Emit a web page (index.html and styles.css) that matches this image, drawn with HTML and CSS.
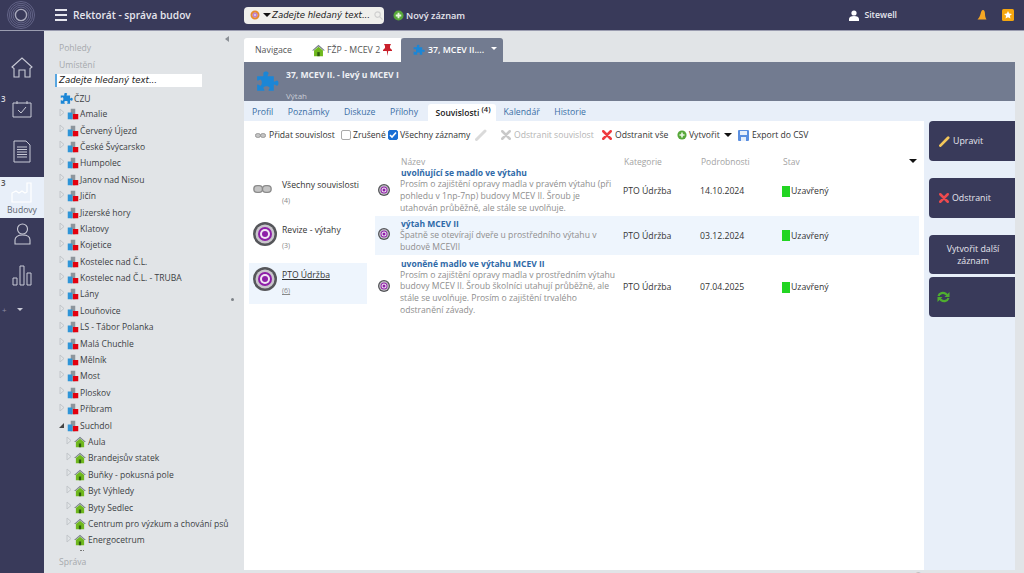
FILE: index.html
```html
<!DOCTYPE html>
<html lang="cs">

<head>
    <meta charset="UTF-8" />
    <title>Rektorát - správa budov</title>
    <link rel="stylesheet" href="styles.css">
</head>

<body>
    <svg class="defs" width="0" height="0">
        <symbol id="puzzle" viewBox="0 0 24 24">
            <path fill="#1b86d6" d="M9 3c0-2 5-2 5 0 0 1-1 1-1 3h6v5c2 0 2-1 3-1 2 0 2 5 0 5-1 0-1-1-3-1v6h-5c0-2 1-2 1-3 0-2-6-2-6 0 0 1 1 1 1 3H3v-6c2 0 2 1 3 1 2 0 2-6 0-6-1 0-1 1-3 1V6h6c0-2 0-2 0-3z" />
        </symbol>
        <symbol id="buildings" viewBox="0 0 16 16">
            <rect x="5" y="1" width="6" height="14" fill="#8d959c" />
            <rect x="1" y="6" width="6" height="9" fill="#2f95d8" />
            <rect x="8" y="8" width="7" height="7" fill="#e3000f" />
        </symbol>
        <symbol id="house" viewBox="0 0 16 16">
            <path fill="#7a838a" d="M8 1 0 8h2l6-5 6 5h2z" />
            <path fill="#6fb81e" d="M2.500 8 8 3.500 13.500 8v7h-11z" />
            <rect x="6.500" y="10" width="3" height="5" fill="#2d5a10" />
        </symbol>
        <symbol id="target" viewBox="0 0 24 24">
            <circle cx="12" cy="12" r="12" fill="#55565a" />
            <circle cx="12" cy="12" r="9.500" fill="#c9c6cc" />
            <circle cx="12" cy="12" r="7" fill="#8e1fa8" />
            <circle cx="12" cy="12" r="5" fill="#f1e6f4" />
            <circle cx="12" cy="12" r="3" fill="#8e1fa8" />
        </symbol>
        <symbol id="cross" viewBox="0 0 12 12">
            <path d="M1.500 1.500 10.500 10.500M10.500 1.500 1.500 10.500" stroke="currentColor" stroke-width="3" stroke-linecap="round" fill="none" />
        </symbol>
        <symbol id="plus" viewBox="0 0 12 12">
            <circle cx="6" cy="6" r="5.500" fill="#57a83a" />
            <path d="M6 3v6M3 6h6" stroke="#e9f5e2" stroke-width="2" />
        </symbol>
        <symbol id="link" viewBox="0 0 14 6">
            <rect x=".5" y=".5" width="6.500" height="5" rx="2.500" fill="#c4c4c4" stroke="#8b8b8b" />
            <rect x="7" y=".5" width="6.500" height="5" rx="2.500" fill="#c4c4c4" stroke="#8b8b8b" />
        </symbol>
        <symbol id="pencil" viewBox="0 0 12 12">
            <path d="M1.500 10.500 10 2" stroke="currentColor" stroke-width="3" stroke-linecap="round" />
        </symbol>
        <symbol id="expander" viewBox="0 0 6 9">
            <path d="M1 1 5 4.500 1 8z" fill="none" stroke="#c2c6ca" />
        </symbol>
    </svg>

    <div class="app">
        <header class="topbar">
            <div class="logo-box">
                <svg width="28" height="28" viewBox="0 0 30 30" fill="none" stroke="#65668a">
                    <circle cx="15" cy="15" r="14.500" />
                    <circle cx="15" cy="15" r="12.500" />
                    <circle cx="15" cy="15" r="10.500" />
                    <circle cx="15" cy="15" r="8.500" />
                    <circle cx="15" cy="15" r="6" stroke="#a9aabd" stroke-width="1.500" />
                </svg>
            </div>
            <div class="burger"><span></span><span></span><span></span></div>
            <div class="app-title">Rektorát - správa budov</div>
            <div class="search">
                <svg width="10" height="10" viewBox="0 0 10 10" fill="none">
                    <circle cx="5" cy="5" r="3.500" stroke="#e8892f" stroke-width="2" />
                    <circle cx="5" cy="5" r="2" fill="#d8c0e8" stroke="#b05fc0" />
                </svg>
                <span class="caret-down"></span>
                <span class="search-text">Zadejte hledaný text...</span>
                <svg width="9" height="9" viewBox="0 0 10 10" fill="none" stroke="#d0d0d0" stroke-width="1.300">
                    <circle cx="4" cy="4" r="3" />
                    <path d="M6.500 6.500 9.500 9.500" />
                </svg>
            </div>
            <div class="new-record">
                <svg width="11" height="11"><use href="#plus" /></svg>
                <span>Nový záznam</span>
            </div>
            <div class="user">
                <svg width="10" height="11" viewBox="0 0 10 11" fill="#fff">
                    <circle cx="5" cy="3" r="2.600" />
                    <path d="M0 11V9c0-2 2-3 5-3s5 1 5 3v2z" />
                </svg>
                <span>Sitewell</span>
            </div>
            <svg class="bell" width="10" height="11" viewBox="0 0 10 11">
                <path fill="#f5a623" d="M6 0c1.500 0 2 2 2 4s.5 4 1.500 5.500H.5C2 8 3 6 3.500 4S4.500 0 6 0z" />
            </svg>
            <svg class="star-box" width="12" height="12" viewBox="0 0 12 12">
                <rect width="12" height="12" rx="1.500" fill="#f5a60f" />
                <path fill="#fff" d="m6 2 1.200 2.600 2.800.3-2.100 1.900.6 2.800L6 8.200 3.500 9.600l.6-2.800L2 4.900l2.800-.3z" />
            </svg>
        </header>

        <div class="workspace">
            <nav class="rail">
                <div class="rail-item rail-home">
                    <svg width="22" height="21" viewBox="0 0 22 21" fill="none" stroke="#c9cad6" stroke-width="1.100">
                        <path d="M1 10 11 1l10 9-2 1.500V20h-5v-7H8v7H3v-8.500z" />
                    </svg>
                </div>
                <div class="rail-item rail-cal">
                    <span class="rail-count">3</span>
                    <svg width="20" height="17" viewBox="0 0 20 17" fill="none" stroke="#c9cad6" stroke-width="1">
                        <path d="M1 2h18v14H1zM5 0v3M15 0v3" />
                        <path d="m6 9 3 3 5-6" />
                    </svg>
                </div>
                <div class="rail-item rail-doc">
                    <svg width="18" height="23" viewBox="0 0 18 23" fill="none" stroke="#c9cad6" stroke-width="1">
                        <path d="M1 1h12l4 4v17H1z" />
                        <path d="M4 7h10M4 9.500h10M4 12h10M4 14.500h10M4 17h10" />
                    </svg>
                </div>
                <div class="rail-item rail-active">
                    <span class="rail-count">3</span>
                    <svg width="22" height="21" viewBox="0 0 22 21" fill="none" stroke="#fff" stroke-width="1.200">
                        <path d="M1 20V11l4-2 3 2 3-2 3 2 2-1V1h4v19z" />
                    </svg>
                    <span class="rail-label">Budovy</span>
                </div>
                <div class="rail-item rail-person">
                    <svg width="17" height="22" viewBox="0 0 17 22" fill="none" stroke="#c9cad6" stroke-width="1.100">
                        <circle cx="8.500" cy="6" r="5" />
                        <path d="M1 21v-4c0-3 3-5 7.500-5s7.500 2 7.500 5v4z" />
                    </svg>
                </div>
                <div class="rail-item rail-chart">
                    <svg width="20" height="21" viewBox="0 0 20 21" fill="none" stroke="#c9cad6" stroke-width="1">
                        <path d="M1 13h4v7H1zM8 1h4v19H8zM15 8h4v12h-4z" />
                    </svg>
                </div>
                <div class="rail-tools"><span>+</span><span class="rail-caret"></span></div>
            </nav>

            <aside class="sidebar">
                <span class="sidebar-handle"></span>
                <span class="sidebar-dot"></span>
                <div class="side-heading">Pohledy</div>
                <div class="side-heading side-place">Umístění</div>
                <div class="tree-search">Zadejte hledaný text...</div>
                <div class="tree" id="tree">
                    <div class="tree-row tree-root"><span class="open"></span><svg class="node" width="14" height="14"><use href="#puzzle" /></svg>ČZU</div>
                </div>
                <div class="side-heading side-bottom">Správa</div>
            </aside>

            <main class="main">
                <div class="tabs">
                    <div class="tab tab-nav">Navigace</div>
                    <div class="tab tab-record">
                        <svg width="13" height="13"><use href="#house" /></svg>
                        <span>FŽP - MCEV 2</span>
                        <svg class="pin" width="9" height="12" viewBox="0 0 9 12">
                            <path fill="#c9202b" d="M1 0h7L7 2v2l2 2v1H5.200L4.500 12 3.800 7H0V6l2-2V2z" />
                        </svg>
                    </div>
                    <div class="tab tab-active">
                        <svg width="13" height="13"><use href="#puzzle" /></svg>
                        <span>37, MCEV II....</span>
                        <span class="caret-white"></span>
                    </div>
                </div>

                <div class="record-head">
                    <svg width="25" height="25"><use href="#puzzle" /></svg>
                    <div class="record-titles">
                        <div class="record-name">37, MCEV II. - levý u MCEV I</div>
                        <div class="record-type">Výtah</div>
                    </div>
                </div>

                <div class="subtabs">
                    <span>Profil</span>
                    <span>Poznámky</span>
                    <span>Diskuze</span>
                    <span>Přílohy</span>
                    <span class="subtab-active">Souvislosti <sup>(4)</sup></span>
                    <span>Kalendář</span>
                    <span>Historie</span>
                </div>

                <div class="content">
                    <section class="panel">
                        <div class="toolbar">
                            <svg class="t-link" width="11" height="5"><use href="#link" /></svg>
                            <span class="t-add">Přidat souvislost</span>
                            <span class="check"></span>
                            <span class="t-cancel">Zrušené</span>
                            <span class="check checked">
                                <svg width="10" height="10" viewBox="0 0 10 10" fill="none" stroke="#fff" stroke-width="1.600"><path d="m2 5 2 2 4-4.500" /></svg>
                            </span>
                            <span class="t-all">Všechny záznamy</span>
                            <svg class="t-pencil" width="12" height="12"><use href="#pencil" /></svg>
                            <svg class="t-x-off" width="10" height="10"><use href="#cross" /></svg>
                            <span class="t-off">Odstranit souvislost</span>
                            <svg class="t-x" width="10" height="10"><use href="#cross" /></svg>
                            <span class="t-remove">Odstranit vše</span>
                            <svg class="t-plus" width="10" height="10"><use href="#plus" /></svg>
                            <span class="t-create">Vytvořit</span>
                            <span class="caret-down t-caret"></span>
                            <svg class="t-save" width="11" height="11" viewBox="0 0 11 11">
                                <rect width="11" height="11" rx="1" fill="#5b8fe0" />
                                <rect x="2" y="1" width="7" height="4" fill="#e8effa" />
                                <rect x="3" y="7" width="5" height="4" fill="#e8effa" />
                            </svg>
                            <span class="t-export">Export do CSV</span>
                        </div>

                        <div class="columns">
                            <div class="groups">
                                <div class="group group-all">
                                    <svg class="group-link" width="19" height="8"><use href="#link" /></svg>
                                    <div>
                                        <div class="group-name">Všechny souvislosti</div>
                                        <div class="group-count">(4)</div>
                                    </div>
                                </div>
                                <div class="group">
                                    <svg width="24" height="24"><use href="#target" /></svg>
                                    <div>
                                        <div class="group-name">Revize - výtahy</div>
                                        <div class="group-count">(3)</div>
                                    </div>
                                </div>
                                <div class="group group-selected">
                                    <svg width="24" height="24"><use href="#target" /></svg>
                                    <div>
                                        <div class="group-name">PTO Údržba</div>
                                        <div class="group-count">(6)</div>
                                    </div>
                                </div>
                            </div>

                            <div class="list">
                                <div class="list-head">
                                    <span class="col-name">Název</span>
                                    <span class="col-cat">Kategorie</span>
                                    <span class="col-date">Podrobnosti</span>
                                    <span class="col-state">Stav</span>
                                    <span class="caret-down head-caret"></span>
                                </div>

                                <div class="row row-first">
                                    <svg width="12" height="12"><use href="#target" /></svg>
                                    <div class="col-name">
                                        <div class="row-title">uvolňující se madlo ve výtahu</div>
                                        <div class="row-text">Prosím o zajištění opravy madla v pravém výtahu (při pohledu v 1np-7np) budovy MCEV II. Šroub je utahován průběžně, ale stále se uvolňuje.</div>
                                    </div>
                                    <div class="col-cat">PTO Údržba</div>
                                    <div class="col-date">14.10.2024</div>
                                    <div class="col-state"><i></i>Uzavřený</div>
                                </div>

                                <div class="row row-hl">
                                    <svg width="12" height="12"><use href="#target" /></svg>
                                    <div class="col-name">
                                        <div class="row-title">výtah MCEV II</div>
                                        <div class="row-text">Špatně se otevírají dveře u prostředního výtahu v budově MCEVII</div>
                                    </div>
                                    <div class="col-cat">PTO Údržba</div>
                                    <div class="col-date">03.12.2024</div>
                                    <div class="col-state"><i></i>Uzavřený</div>
                                </div>

                                <div class="row row-last">
                                    <svg width="12" height="12"><use href="#target" /></svg>
                                    <div class="col-name">
                                        <div class="row-title">uvoněné madlo ve výtahu MCEV II</div>
                                        <div class="row-text">Prosím o zajištění opravy madla v prostředním výtahu budovy MCEV II. Šroub školníci utahují průběžně, ale stále se uvolňuje. Prosím o zajištění trvalého odstranění závady.</div>
                                    </div>
                                    <div class="col-cat">PTO Údržba</div>
                                    <div class="col-date">07.04.2025</div>
                                    <div class="col-state"><i></i>Uzavřený</div>
                                </div>
                            </div>
                        </div>
                    </section>

                    <aside class="actions">
                        <div class="action">
                            <svg class="icon-pencil" width="11" height="11"><use href="#pencil" /></svg>Upravit
                        </div>
                        <div class="action action-remove">
                            <svg class="icon-x" width="10" height="10"><use href="#cross" /></svg>Odstranit
                        </div>
                        <div class="action action-next">Vytvořit další záznam</div>
                        <div class="action action-refresh">
                            <svg width="13" height="12" viewBox="0 0 13 12" fill="none" stroke="#4fae2f" stroke-width="2.200">
                                <path d="M1.500 5C2.500 2 6 1 9 3l2 2" />
                                <path d="M11.500 7C10.500 10 7 11 4 9L2 7" />
                                <path fill="#4fae2f" stroke="none" d="M12.500 1v5h-5zM.5 11V6h5z" />
                            </svg>
                        </div>
                    </aside>
                </div>
                <div class="footer">© Sitewell EIP4 v20250422.22.24</div>
            </main>
        </div>
    </div>

    <script>
        const tree = document.getElementById("tree");
        const sites = ["Amalie", "Červený Újezd", "České Švýcarsko", "Humpolec", "Janov nad Nisou", "Jičín", "Jizerské hory", "Klatovy", "Kojetice", "Kostelec nad Č.L.", "Kostelec nad Č.L. - TRUBA", "Lány", "Louňovice", "LS - Tábor Polanka", "Malá Chuchle", "Mělník", "Most", "Ploskov", "Příbram"];
        const houses = ["Aula", "Brandejsův statek", "Buňky - pokusná pole", "Byt Výhledy", "Byty Sedlec", "Centrum pro výzkum a chování psů", "Energocetrum"];

        function addRow(name, icon, cls, expander) {
            const row = document.createElement("div");
            row.className = "tree-row " + cls;
            row.innerHTML = expander + `<svg class="node" width="12" height="12"><use href="#${icon}" /></svg>` + name;
            tree.appendChild(row);
        }

        const closed = '<svg class="closed" width="6" height="9"><use href="#expander" /></svg>';
        sites.forEach(name => addRow(name, "buildings", "tree-site", closed));
        addRow("Suchdol", "buildings", "tree-site", '<span class="open"></span>');
        houses.forEach(name => addRow(name, "house", "tree-house", closed));

        // next row of the tree is scrolled out, only its top shows
        const more = document.createElement("div");
        more.className = "tree-more";
        tree.appendChild(more);
    </script>
</body>

</html>
```

FILE: styles.css
```css
* {
    box-sizing: border-box;
}

body {
    margin: 0;
    overflow: hidden;
    background: #e1e4e7;
    font-family: "Open Sans", sans-serif;
    font-size: 9px;
    color: #333;
}

.defs {
    position: absolute;
}

.app {
    width: 1024px;
    height: 573px;
    display: flex;
    flex-direction: column;
    overflow: hidden;
}

/* top bar */
.topbar {
    height: 31px;
    flex: none;
    display: flex;
    align-items: center;
    padding-right: 10px;
    background: #393a5a;
    border-bottom: 1px solid #9a9cb0;
    color: #e6e6ee;
}

.topbar > * {
    flex: none;
}

.logo-box {
    width: 44px;
    padding-left: 7px;
    display: flex;
}

.burger {
    width: 12px;
    margin-left: 11px;
    display: flex;
    flex-direction: column;
    gap: 3.500px;
}

.burger span {
    height: 1.500px;
    background: #e6e6ee;
}

.app-title {
    width: 171px;
    margin-left: 6px;
    font-size: 10.200px;
    font-weight: 600;
    white-space: nowrap;
}

.search {
    width: 140px;
    height: 17px;
    padding: 0 1px 0 6px;
    display: flex;
    align-items: center;
    background: #efefec;
    border-radius: 4px;
    color: #222;
}

.caret-down {
    display: inline-block;
    width: 0;
    height: 0;
    border-left: 4px solid transparent;
    border-right: 4px solid transparent;
    border-top: 4px solid #111;
}

.search .caret-down {
    margin: 0 1px 0 3px;
}

.search-text {
    width: 102px;
    font-family: "DejaVu Sans", sans-serif;
    font-style: italic;
    font-size: 8.600px;
    white-space: nowrap;
}

.new-record {
    margin-left: 9px;
    display: flex;
    align-items: center;
    gap: 2px;
    font-size: 9.200px;
    font-weight: 600;
    white-space: nowrap;
}

.user {
    margin-left: auto;
    display: flex;
    align-items: center;
    gap: 5px;
    font-size: 8.700px;
    font-weight: 600;
}

.bell {
    margin-left: 80px;
}

.star-box {
    margin-left: 15px;
}

/* left rail */
.workspace {
    flex: 1;
    min-height: 0;
    display: flex;
}

.rail {
    width: 44px;
    flex: none;
    background: #393a5a;
    display: flex;
    flex-direction: column;
}

.rail-item {
    position: relative;
    display: flex;
    flex-direction: column;
    align-items: center;
}

.rail-home {
    padding-top: 26px;
}

.rail-cal {
    padding-top: 23px;
}

.rail-doc {
    padding-top: 22px;
    height: 59px;
}

.rail-active {
    height: 41px;
    padding-top: 5px;
    background: #e8eff9;
}

.rail-label {
    margin-top: 1px;
    font-size: 8.600px;
    color: #5d6470;
}

.rail-count {
    position: absolute;
    left: 1px;
    top: 0;
    font-size: 8px;
    font-weight: 600;
    color: #d8d8e0;
}

.rail-cal .rail-count {
    top: 15px;
}

.rail-active .rail-count {
    color: #555;
}

.rail-person {
    padding-top: 5px;
}

.rail-chart {
    padding-top: 20px;
}

.rail-tools {
    margin-top: 18px;
    padding-left: 2px;
    display: flex;
    align-items: center;
    gap: 10px;
    color: #8d8ea3;
    font-size: 8px;
}

.rail-caret {
    width: 0;
    height: 0;
    border-left: 3.500px solid transparent;
    border-right: 3.500px solid transparent;
    border-top: 3.500px solid #c9cad6;
}

/* tree sidebar */
.sidebar {
    position: relative;
    width: 200px;
    flex: none;
    display: flex;
    flex-direction: column;
    padding: 11px 0 0 15px;
    background: #e1e4e7;
}

.sidebar-handle {
    position: absolute;
    left: 181px;
    top: 5px;
    width: 0;
    height: 0;
    border-top: 3px solid transparent;
    border-bottom: 3px solid transparent;
    border-right: 4px solid #8b9096;
}

.sidebar-dot {
    position: absolute;
    left: 187px;
    top: 267px;
    width: 3px;
    height: 3px;
    border-radius: 50%;
    background: #7d8288;
}

.side-heading {
    font-size: 8.600px;
    color: #a6a9ad;
    line-height: 12px;
}

.side-place {
    margin-top: 5px;
}

.side-bottom {
    margin-top: 2px;
    height: 17px;
}

.tree-search {
    width: 147px;
    height: 13px;
    margin: 3px 0 0 -4px;
    padding-left: 2px;
    background: #fff;
    border-left: 2px solid #58a6e0;
    font-family: "DejaVu Sans", sans-serif;
    font-style: italic;
    font-size: 8.600px;
    line-height: 13px;
    color: #222;
    white-space: nowrap;
}

.tree {
    flex: 1;
    min-height: 0;
    overflow: hidden;
    margin-top: 4px;
}

.tree-row {
    height: 16.400px;
    display: flex;
    align-items: center;
    font-size: 8.550px;
    font-weight: 500;
    color: #3c3f44;
    white-space: nowrap;
}

.node {
    flex: none;
    margin-right: 1px;
}

.tree-root {
    height: 15px;
    margin-left: -7px;
}

.tree-root .node {
    margin: 0 1px 0 2px;
}

.tree-house {
    padding-left: 7px;
}

.tree-house .node {
    margin-right: 2px;
}

.tree-more {
    width: 4px;
    height: 2px;
    margin: 1px 0 0 21px;
    border-top: 1px dotted #777;
}

.closed {
    margin: -4px 2px 0 0;
    flex: none;
}

.open {
    width: 0;
    height: 0;
    border-bottom: 5px solid #444;
    border-left: 5px solid transparent;
    flex: none;
}

.tree-site .open {
    margin-right: 3px;
}

/* main area */
.main {
    width: 771px;
    flex: none;
    display: flex;
    flex-direction: column;
    padding-top: 7px;
}

.tabs {
    height: 24px;
    flex: none;
    display: flex;
    font-size: 8.800px;
}

.tab {
    display: flex;
    align-items: center;
    background: #fff;
    color: #555;
}

.tab-nav {
    width: 56px;
    padding-left: 11px;
    border-top-left-radius: 3px;
}

.tab-record {
    width: 101px;
    padding-left: 12px;
    gap: 2px;
}

.pin {
    margin-left: 1px;
}

.tab-active {
    width: 102px;
    padding-left: 11px;
    gap: 3px;
    background: #727b90;
    color: #fff;
    font-weight: 600;
    border-radius: 3px 3px 0 0;
}

.caret-white {
    width: 0;
    height: 0;
    margin: -3px 0 0 4px;
    border-left: 3.500px solid transparent;
    border-right: 3.500px solid transparent;
    border-top: 3.500px solid #fff;
}

.record-head {
    height: 39px;
    flex: none;
    display: flex;
    padding-left: 10px;
    background: #727b90;
    color: #fff;
}

.record-head svg {
    margin-top: 8px;
}

.record-titles {
    margin-left: 7px;
    display: flex;
    flex-direction: column;
    justify-content: space-between;
}

.record-name {
    margin-top: 7px;
    font-size: 8.600px;
    font-weight: 700;
    color: #eef0f4;
}

.record-type {
    font-size: 8px;
    color: #c8ccd6;
    line-height: 9px;
    margin-bottom: 1px;
}

.subtabs {
    height: 20px;
    flex: none;
    display: flex;
    padding-left: 8px;
    background: #e8eff9;
    font-size: 8.700px;
    color: #3a6ea5;
    font-weight: 500;
}

.subtabs span {
    margin-right: 14.500px;
    line-height: 23px;
}

.subtabs .subtab-active {
    height: 17px;
    margin: 3px 8px 0 -5px;
    padding: 0 5px 0 8px;
    background: #fff;
    border-radius: 3px 3px 0 0;
    color: #222;
    font-weight: 600;
    font-size: 8.500px;
    line-height: 17px;
}

.subtab-active sup {
    font-size: 7.500px;
    line-height: 0;
}

.content {
    flex: 1;
    min-height: 0;
    display: flex;
}

.panel {
    width: 680px;
    flex: none;
    background: #fff;
}

.toolbar {
    height: 28px;
    display: flex;
    align-items: center;
    padding-left: 11px;
    font-size: 8.600px;
    font-weight: 500;
    color: #333;
    white-space: nowrap;
}

.t-add {
    margin-left: 3px;
    width: 72px;
}

.check {
    width: 10px;
    height: 10px;
    flex: none;
    border: 1px solid #aaa;
    border-radius: 2px;
    background: #fff;
}

.checked {
    display: flex;
    background: #1a6fd4;
    border-color: #1a6fd4;
}

.checked svg {
    margin: -1px;
}

.t-cancel {
    width: 35px;
    margin-left: 2px;
}

.t-all {
    width: 75px;
    margin-left: 2px;
}

.t-pencil {
    color: #dadada;
}

.t-x-off {
    margin-left: 14px;
    color: #c9c9c9;
}

.t-off {
    width: 88px;
    margin-left: 3px;
    color: #b4b4b4;
}

.t-x {
    color: #ee3a3e;
}

.t-remove {
    width: 62px;
    margin-left: 3px;
}

.t-create {
    width: 35px;
    margin-left: 2px;
}

.t-caret {
    margin-right: 6px;
}

.t-export {
    margin-left: 3px;
}

.columns {
    display: flex;
}

.groups {
    width: 123px;
    margin-left: 5px;
    flex: none;
    padding-top: 24px;
}

.group {
    height: 41px;
    margin-bottom: 4px;
    display: flex;
    align-items: center;
    gap: 5px;
    padding-left: 4px;
}

.group svg {
    margin-top: -10px;
}

.group > div {
    margin-top: -2px;
}

.group-all {
    gap: 10px;
}

.group-name {
    font-size: 8.600px;
    font-weight: 500;
    color: #333;
    line-height: 14px;
}

.group-count {
    margin-top: 3px;
    font-size: 7px;
    color: #888;
    line-height: 12px;
}

.group-selected {
    width: 118px;
    background: #eef5fd;
}

.group-selected .group-name,
.group-selected .group-count {
    text-decoration: underline;
}

.list {
    width: 544px;
    margin-left: 3px;
    flex: none;
}

.list-head {
    position: relative;
    height: 17px;
    display: flex;
    align-items: flex-start;
    padding: 7px 0 0 26px;
    font-size: 8.500px;
    color: #a3a3a3;
}

.head-caret {
    position: absolute;
    right: 2px;
    top: 10px;
}

.col-name {
    width: 223px;
    flex: none;
}

.col-cat {
    width: 77px;
    flex: none;
}

.col-date {
    width: 82px;
    flex: none;
}

.col-state {
    flex: none;
    display: flex;
    align-items: center;
    gap: 1px;
}

.row {
    display: flex;
    align-items: center;
    padding-left: 3px;
    font-size: 8.700px;
    font-weight: 500;
    color: #333;
}

.row > svg {
    flex: none;
    margin: -3px 10px 0 0;
}

.row-first {
    height: 50px;
}

.row-hl {
    height: 39px;
    background: #eef5fd;
}

.row-last {
    height: 64px;
}

.row-title {
    padding-left: 1px;
    font-size: 8.500px;
    font-weight: 700;
    color: #2f6aa8;
    line-height: 12px;
}

.row-text {
    max-width: 217px;
    font-size: 8.600px;
    font-weight: 400;
    color: #8e8e8e;
    line-height: 11.700px;
}

.col-state i {
    width: 8px;
    height: 11px;
    background: #22d522;
}

/* action buttons */
.actions {
    width: 91px;
    flex: none;
    background: #e8eff9;
    padding-left: 5px;
    display: flex;
    flex-direction: column;
}

.action {
    height: 40px;
    display: flex;
    align-items: center;
    padding-left: 10px;
    gap: 3px;
    background: #393a5a;
    border-radius: 4px 0 0 4px;
    color: #e6e6ee;
    font-size: 8.800px;
    font-weight: 500;
}

.icon-pencil {
    color: #f4c75a;
}

.icon-x {
    color: #ee4a4e;
}

.action-remove {
    margin-top: 17px;
}

.action-next {
    margin-top: 17px;
    height: 39px;
    padding: 0 8px 0 10px;
    text-align: center;
    line-height: 12px;
}

.action-refresh {
    margin-top: 3px;
    padding-left: 8px;
}

.footer {
    height: 3px;
    flex: none;
    overflow: hidden;
    margin-right: -9px;
    padding-left: 671px;
    font-size: 8px;
    line-height: 9px;
    color: #9a9a9a;
    white-space: nowrap;
}
```
